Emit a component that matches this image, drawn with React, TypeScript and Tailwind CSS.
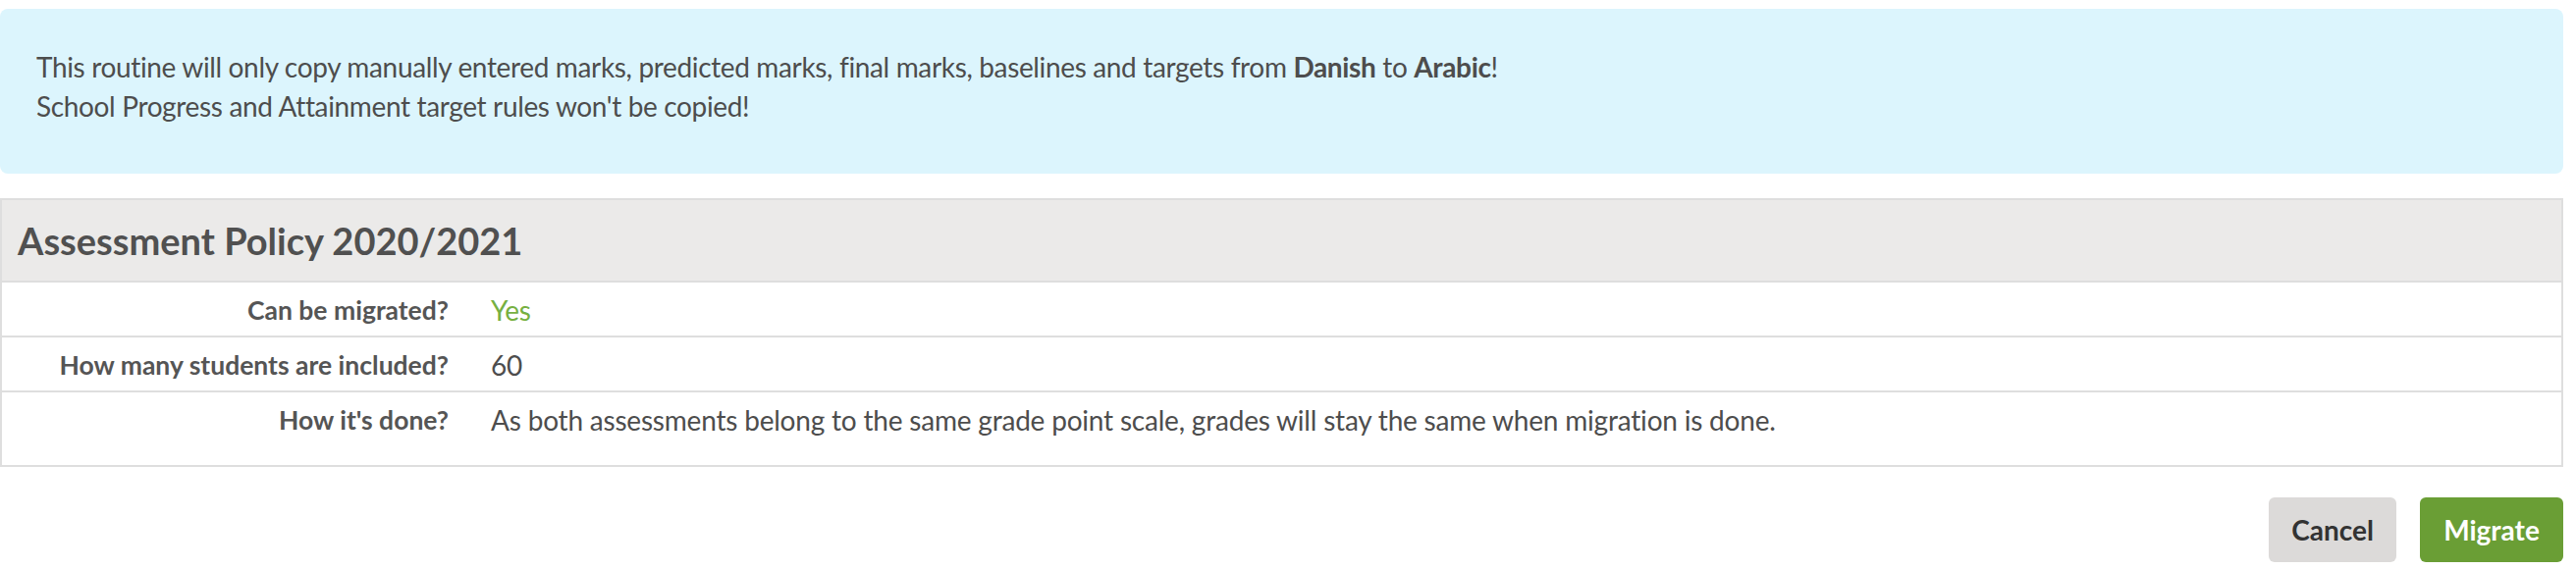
import React from 'react';

const rows = [
  { label: 'Can be migrated?', value: 'Yes', green: true },
  { label: 'How many students are included?', value: '60' },
  {
    label: "How it's done?",
    value:
      'As both assessments belong to the same grade point scale, grades will stay the same when migration is done.',
    last: true,
  },
];

export default function App() {
  return (
    <div className="w-[2624px] h-[580px] bg-white pr-[13px] pt-[9px] text-[#4d4d4d] font-['Lato','Liberation_Sans',sans-serif]">
      {/* info alert */}
      <div className="h-[168px] rounded-[8px] bg-[#dcf5fd] pl-[37px] pt-[39px] text-[28px] leading-[40px] tracking-[-0.35px]">
        <p>
          This routine will only copy manually entered marks, predicted marks, final marks, baselines and targets
          from <strong className="font-bold">Danish</strong> to <strong className="font-bold">Arabic</strong>!
        </p>
        <p>School Progress and Attainment target rules won't be copied!</p>
      </div>

      {/* policy table */}
      <div className="mt-[25px] border-2 border-[#dedede]">
        <div className="h-[84px] bg-[#ebeae9] border-b-2 border-[#dedede] pl-[16px] flex items-center">
          <h3 className="text-[38px] leading-[44px] font-bold text-[#505050]">Assessment Policy 2020/2021</h3>
        </div>
        {rows.map((r, i) => (
          <div
            key={i}
            className={`grid grid-cols-[455px_1fr] gap-x-[43px] leading-[36px] pt-[10px] ${
              r.last ? 'pb-[28px]' : 'pb-[8px] border-b-2 border-[#dedede]'
            }`}
          >
            <div className="text-right text-[26.5px] font-bold text-[#555]">{r.label}</div>
            <div className={`text-[28px] tracking-[-0.2px] ${r.green ? 'text-[#76b041]' : 'text-[#4d4d4d]'}`}>
              {r.value}
            </div>
          </div>
        ))}
      </div>

      {/* actions */}
      <div className="mt-[31px] flex justify-end gap-[24px]">
        <button className="h-[66px] w-[130px] rounded-[6px] bg-[#dcdad9] text-[28px] font-bold text-[#333]">
          Cancel
        </button>
        <button className="h-[66px] w-[146px] rounded-[6px] bg-[#6a9e35] text-[28px] font-bold text-white">
          Migrate
        </button>
      </div>
    </div>
  );
}
